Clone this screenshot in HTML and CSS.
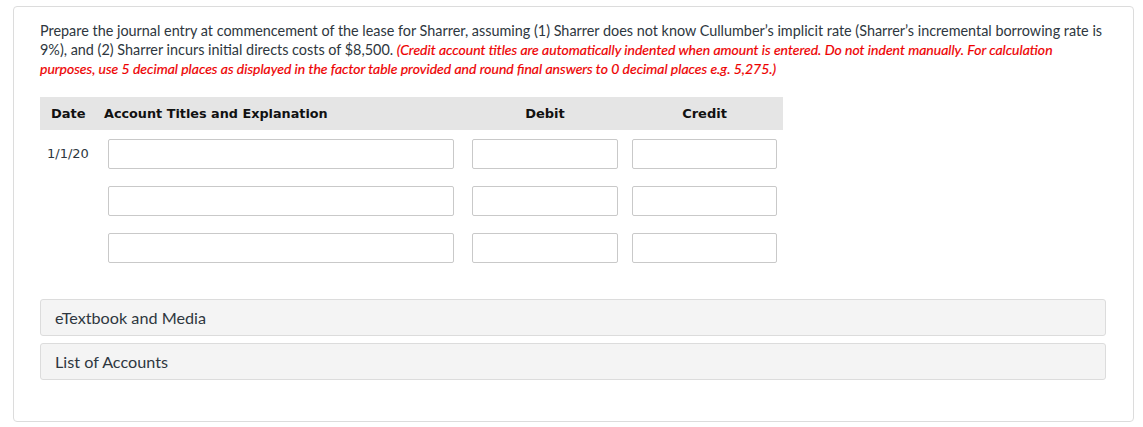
FILE: index.html
```html
<!DOCTYPE html>
<html>
<head>
<meta charset="utf-8">
<link rel="stylesheet" href="styles.css">
</head>
<body>
<div class="card">
  <p class="question">Prepare the journal entry at commencement of the lease for Sharrer, assuming (1) Sharrer does not know Cullumber’s implicit rate (Sharrer’s incremental borrowing rate is 9%), and (2) Sharrer incurs initial directs costs of $8,500. <em class="note">(Credit account titles are automatically indented when amount is entered. Do not indent manually. For calculation purposes, use 5 decimal places as displayed in the factor table provided and round final answers to 0 decimal places e.g. 5,275.)</em></p>

  <div class="journal">
    <div class="jrow head">
      <div class="c-date">Date</div>
      <div class="c-acct"><span class="acct-label">Account Titles and Explanation</span></div>
      <div class="c-debit"><span class="num-label">Debit</span></div>
      <div class="c-credit"><span class="num-label cr">Credit</span></div>
    </div>
    <div class="jrow">
      <div class="c-date val">1/1/20</div>
      <div class="c-acct"><input class="in in-acct" type="text"></div>
      <div class="c-debit"><input class="in in-debit" type="text"></div>
      <div class="c-credit"><input class="in in-credit" type="text"></div>
    </div>
    <div class="jrow">
      <div class="c-date val"></div>
      <div class="c-acct"><input class="in in-acct" type="text"></div>
      <div class="c-debit"><input class="in in-debit" type="text"></div>
      <div class="c-credit"><input class="in in-credit" type="text"></div>
    </div>
    <div class="jrow">
      <div class="c-date val"></div>
      <div class="c-acct"><input class="in in-acct" type="text"></div>
      <div class="c-debit"><input class="in in-debit" type="text"></div>
      <div class="c-credit"><input class="in in-credit" type="text"></div>
    </div>
  </div>

  <div class="panels">
    <div class="panel">eTextbook and Media</div>
    <div class="panel">List of Accounts</div>
  </div>
</div>
</body>
</html>
```
FILE: styles.css
```css
* { box-sizing: border-box; }
html, body { margin: 0; padding: 0; background: #fff; }
body {
  padding: 6px 9px 0 13px;
  font-family: Lato, "Open Sans", sans-serif;
  color: #2e3740;
}
.card {
  width: 1121px;
  height: 416px;
  border: 1px solid #dcdcdc;
  border-radius: 4px;
  padding: 14px 26px 0 26px;
}
.question {
  margin: 0;
  font-size: 14.4px;
  line-height: 19px;
  width: 1068px;
}
.note {
  color: #ee0000;
  font-style: italic;
  font-weight: normal;
  font-size: 14px;
  -webkit-text-stroke: 0.2px #ee0000;
}
.journal {
  margin-top: 19px;
  width: 743px;
  font-family: "DejaVu Sans", Verdana, sans-serif;
  font-size: 13px;
}
.jrow {
  display: grid;
  grid-template-columns: 68px 364px 160px 151px;
  height: 47px;
  align-items: start;
  padding-top: 9px;
}
.jrow.head {
  height: 33px;
  padding-top: 0;
  align-items: center;
  background: #e5e5e5;
  font-weight: bold;
  color: #111;
}
.c-date { padding-left: 11px; }
.c-date.val { padding-left: 7px; padding-top: 7px; color: #2e3740; }
.acct-label { margin-left: -4px; font-size: 12.8px; }
.num-label { display: block; width: 146px; text-align: center; }
.num-label.cr { width: 145px; }
.in {
  display: block;
  height: 30px;
  border: 1px solid #c9c9c9;
  border-radius: 2px;
  background: #fff;
  margin: 0;
  padding: 0 6px;
}
.in-acct { width: 346px; }
.in-debit { width: 146px; }
.in-credit { width: 145px; }
.panels {
  margin-top: 28px;
  width: 1066px;
  display: flex;
  flex-direction: column;
  gap: 7px;
}
.panel {
  height: 37px;
  background: #f4f4f4;
  border: 1px solid #dcdcdc;
  border-radius: 3px;
  padding-left: 14px;
  font-size: 16.2px;
  line-height: 35px;
  color: #2e3740;
}
```
